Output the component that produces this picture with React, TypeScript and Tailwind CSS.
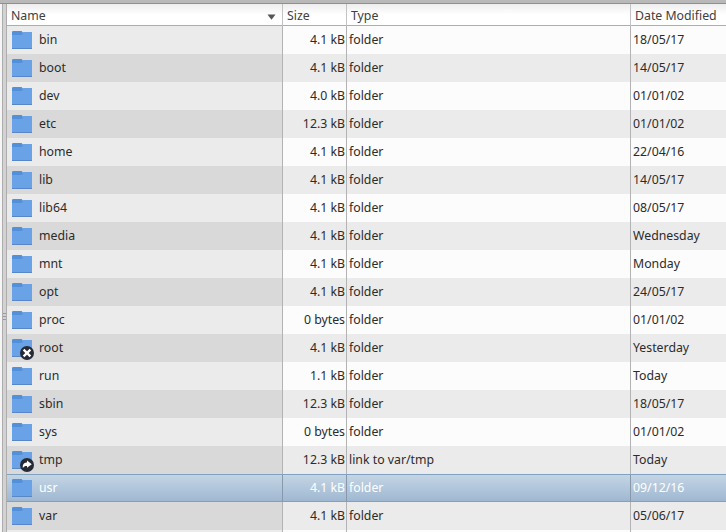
type Badge = 'denied' | 'link';
type Entry = { name: string; size: string; type?: string; date: string; badge?: Badge; selected?: boolean };

const entries: Entry[] = [
  { name: 'bin', size: '4.1 kB', date: '18/05/17' },
  { name: 'boot', size: '4.1 kB', date: '14/05/17' },
  { name: 'dev', size: '4.0 kB', date: '01/01/02' },
  { name: 'etc', size: '12.3 kB', date: '01/01/02' },
  { name: 'home', size: '4.1 kB', date: '22/04/16' },
  { name: 'lib', size: '4.1 kB', date: '14/05/17' },
  { name: 'lib64', size: '4.1 kB', date: '08/05/17' },
  { name: 'media', size: '4.1 kB', date: 'Wednesday' },
  { name: 'mnt', size: '4.1 kB', date: 'Monday' },
  { name: 'opt', size: '4.1 kB', date: '24/05/17' },
  { name: 'proc', size: '0 bytes', date: '01/01/02' },
  { name: 'root', size: '4.1 kB', date: 'Yesterday', badge: 'denied' },
  { name: 'run', size: '1.1 kB', date: 'Today' },
  { name: 'sbin', size: '12.3 kB', date: '18/05/17' },
  { name: 'sys', size: '0 bytes', date: '01/01/02' },
  { name: 'tmp', size: '12.3 kB', type: 'link to var/tmp', date: 'Today', badge: 'link' },
  { name: 'usr', size: '4.1 kB', date: '09/12/16', selected: true },
  { name: 'var', size: '4.1 kB', date: '05/06/17' },
];

const columns = 'grid grid-cols-[276px_64px_284px_95px]';

function FolderIcon({ badge }: { badge?: Badge }) {
  return (
    <svg width="24" height="28" viewBox="0 0 24 28" className="-my-px shrink-0">
      <path d="M0 9V6.2Q0 5 1.2 5H9.6L11 6.4V9Z" fill="#5290da" />
      <path d="M0 9H9.6L11 7.6V6H20V23H0Z" fill="#6aa2e7" />
      <path d="M0 22H20V23H0Z" fill="#5787c7" />
      {badge && <circle cx="15" cy="19" r="7" fill="#252a35" />}
      {badge === 'denied' && (
        <path d="M11.6 15.6L18.4 22.4M18.4 15.6L11.6 22.4" stroke="#fff" strokeWidth="2.3" fill="none" />
      )}
      {badge === 'link' && (
        <path d="M15 14.6L19.8 18.2L15 21.8V20C13 19.9 12 20.3 10.9 21.9C10.3 18.6 12 16.5 15 16.5Z" fill="#fff" />
      )}
    </svg>
  );
}

function Row({ entry, odd }: { entry: Entry; odd: boolean }) {
  const tone = entry.selected
    ? 'border-y border-[#7fa2c2] bg-linear-to-b from-[#c4d5e4] to-[#9fb8d2] text-white leading-[26px]'
    : odd
      ? 'bg-[#ebebeb] leading-[28px]'
      : 'bg-[#fcfcfc] leading-[28px]';
  const nameTone = entry.selected ? '' : odd ? 'bg-[#d9d9d9]' : 'bg-[#ebebeb]';
  const line = entry.selected ? 'border-[#8798aa]' : 'border-[#b3b3b3]';
  return (
    <div className={`${columns} h-[28px] shrink-0 ${tone}`}>
      <div className={`flex items-center border-r pl-[5px] ${nameTone} ${line}`}>
        <FolderIcon badge={entry.badge} />
        <span className="pl-[3px]">{entry.name}</span>
      </div>
      <div className={`border-r pr-px text-right ${line}`}>{entry.size}</div>
      <div className={`border-r pl-[2px] ${line}`}>{entry.type ?? 'folder'}</div>
      <div className="pl-[2px]">{entry.date}</div>
    </div>
  );
}

export default function App() {
  return (
    <div className="flex h-[532px] w-[726px] flex-col overflow-hidden bg-[#fcfcfc] font-['Noto_Sans','Open_Sans',sans-serif] text-[12.3px] whitespace-nowrap text-[#2b2b2b]">
      <div className="h-[4px] shrink-0 border-b border-[#8f8f8f] bg-[#b9b9b9]" />
      <div className="flex min-h-0 flex-1">
        <div className="w-[2px] shrink-0 bg-[#f5f5f5]" />
        <div className="flex w-[5px] shrink-0 flex-col gap-[2px] border-x border-[#adadad] bg-[#d2d2d2] pt-[309px]">
          <div className="h-px bg-[#999]" />
          <div className="h-px bg-[#999]" />
          <div className="h-px bg-[#999]" />
        </div>
        <div className="flex min-w-0 flex-1 flex-col">
          <div className={`${columns} h-[22px] shrink-0 border-b border-[#adadad] bg-linear-to-b from-[#ededed] to-white to-50% leading-[23px] text-[#404040]`}>
            <div className="flex items-center justify-between border-r border-[#c3c3c3] pr-[6px] pl-[4px]">
              <span>Name</span>
              <svg width="9" height="6" viewBox="0 0 9 6" className="mt-[2px]">
                <path d="M0.5 0.5H8.5L4.5 5.8Z" fill="#555" />
              </svg>
            </div>
            <div className="border-r border-[#c3c3c3] pl-[4px]">Size</div>
            <div className="border-r border-[#c3c3c3] pl-[4px]">Type</div>
            <div className="pl-[4px]">Date Modified</div>
          </div>
          {entries.map((entry, i) => (
            <Row key={entry.name} entry={entry} odd={i % 2 === 1} />
          ))}
          <div className={`${columns} h-[2px] shrink-0`}>
            <div className="border-r border-[#b3b3b3] bg-[#ebebeb]" />
            <div className="border-r border-[#b3b3b3]" />
            <div className="border-r border-[#b3b3b3]" />
          </div>
        </div>
      </div>
    </div>
  );
}
